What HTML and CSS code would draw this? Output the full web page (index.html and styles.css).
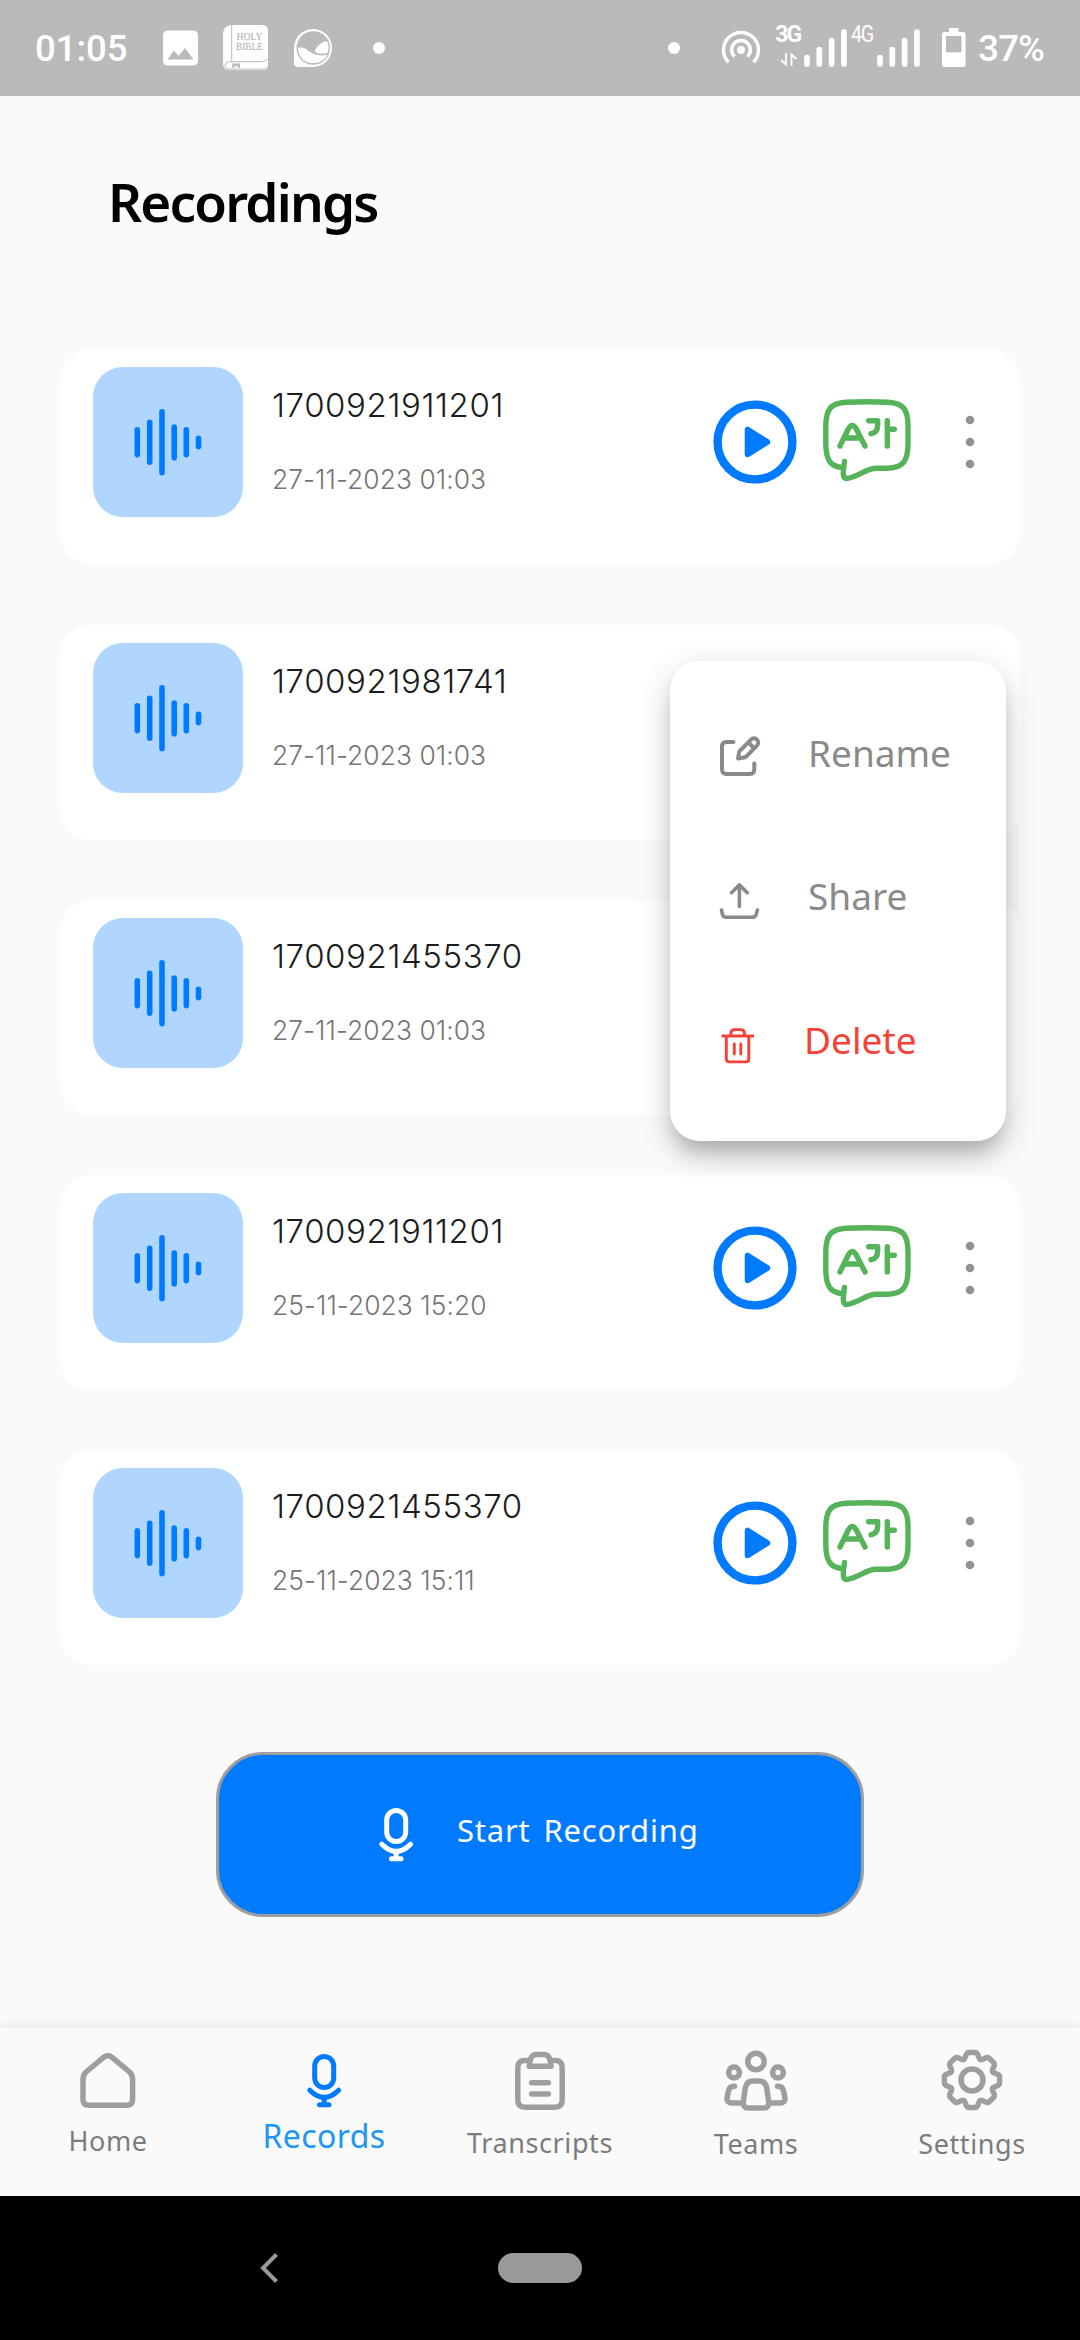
FILE: index.html
```
<!DOCTYPE html>
<html lang="en">
<head>
<meta charset="utf-8">
<title>Recordings</title>
<link rel="stylesheet" href="styles.css">
</head>
<body>
<svg class="sprite" aria-hidden="true">
  <symbol id="wave" viewBox="0 0 68 68">
    <g stroke="#007bff" stroke-width="5.6" stroke-linecap="round">
      <path d="M3.3 21.800V46.600M15.700 14.300V54.100M28 3.800V64.600M40.200 19.100V49.700M52.300 21.800V46.600M64.500 30.200V38.600"/>
    </g>
  </symbol>
  <symbol id="play" viewBox="0 0 84 84">
    <circle cx="42" cy="42" r="37.400" fill="none" stroke="#007bff" stroke-width="8.400"/>
    <path d="M34.700 29.700V54.300L54.300 42Z" fill="#007bff" stroke="#007bff" stroke-width="6" stroke-linejoin="round"/>
  </symbol>
  <symbol id="translate" viewBox="0 0 90 86">
    <g fill="none" stroke="#55b35a" stroke-width="5.400" stroke-linecap="round" stroke-linejoin="round">
      <path d="M21 69.600C8 69 4 61.500 3.800 46V28C4 11 9 5 24 4.200C36 3.700 54 3.700 66 4.200C81 5 86 11 86 28V46C86 63 81 69.500 66 70.200L53 70.300C44 71 36 78.500 25.500 80.400C21 80.800 21 77 21.500 71L22.500 63.500"/>
      <path d="M18 48L26.300 31Q30.300 24 34.300 31L43 48M22.500 40H38.500"/>
      <path d="M46.700 22.700H55.700V27Q55.500 35 49 35.700"/>
      <path d="M65.300 22.700V48M65.300 31.300H72.300"/>
    </g>
  </symbol>
  <symbol id="more" viewBox="0 0 24 60">
    <g fill="#929292"><circle cx="12" cy="8" r="4.300"/><circle cx="12" cy="30" r="4.300"/><circle cx="12" cy="52" r="4.300"/></g>
  </symbol>
  <symbol id="mic" viewBox="0 0 64 64">
    <g fill="none" stroke="currentColor" stroke-width="5" stroke-linecap="round">
      <rect x="22.700" y="8.500" width="19" height="31" rx="9.500"/>
      <path d="M17.800 42.200Q32.200 56.500 46.600 42.200M32.200 50V56M27.500 56.700H37"/>
    </g>
  </symbol>
</svg>

<header class="status">
  <span class="status-text">01:05</span>
  <svg class="s-photo" width="35" height="36" viewBox="0 0 35 36"><rect width="35" height="35" rx="4.500" y=".5" fill="#fff"/><path d="M4.500 29.500L11 20.500L15.500 26L22 18L30.500 29.500Z" fill="#bababa"/></svg>
  <svg class="s-bible" width="46" height="46" viewBox="0 0 46 46">
    <path d="M7.500 0H40Q45 0 45 6V41Q45 45 40 45H5Q0 44 0 38V8Q1 1 7.500 0Z" fill="#fff"/>
    <path d="M8.700 0V36M44.500 34Q42 36.700 38 36.700H6Q2 37.500 2 40.500Q2.500 44 6 44H39Q43 44 44.500 42" fill="none" stroke="#bababa" stroke-width="1"/>
    <path d="M9.300 38.500H17V43.500L13.200 40.800L9.300 43.500Z" fill="#bababa"/>
    <text x="13.500" y="14.500" textLength="26" lengthAdjust="spacingAndGlyphs" class="book-text">HOLY</text>
    <text x="13" y="25" textLength="27" lengthAdjust="spacingAndGlyphs" class="book-text">BIBLE</text>
  </svg>
  <svg class="s-leaf" width="39" height="39" viewBox="0 0 39 39">
    <path d="M0 19A19 19 0 1 1 19 38H4Q0 38 0 34Z" fill="#fff"/>
    <circle cx="19.300" cy="19" r="16.800" fill="#bababa"/>
    <path d="M4 19C11 17 14 23 20 25C25 27 30 26.500 33.500 25.500C31 31.500 26 34 19 34C10 34 4.500 28 4 19Z" fill="#fff"/>
    <path d="M20.500 22.500C23.500 16.500 27 13 32.500 12C35 15 35 19 34 23.500C29 25.500 24 25 20.500 22.500Z" fill="#fff"/>
  </svg>
  <i class="dot dot-left"></i>
  <i class="dot dot-right"></i>
  <svg class="s-cast" width="40" height="40" viewBox="0 0 40 40"><g fill="none" stroke="#fff" stroke-width="3.400"><path d="M7.600 32.300A17.500 17.500 0 1 1 32.400 32.300"/><path d="M13.600 26.600A9.300 9.300 0 1 1 26.400 26.600"/></g><circle cx="20" cy="20" r="4" fill="#fff"/></svg>
  <div class="net net-3g"><b>3G</b><svg width="16" height="13" viewBox="0 0 16 13"><path d="M5 0V11.500L0 7M10.500 13V1.500L15.500 6" fill="none" stroke="#fff" stroke-width="1.800"/></svg></div>
  <svg class="s-bars" width="44" height="38" viewBox="0 0 44 38"><path d="M3 28.500V35M15.300 20.500V35M27.600 11.500V35M39.900 3V35" stroke="#fff" stroke-width="5.700" stroke-linecap="round"/></svg>
  <div class="net net-4g">4G</div>
  <svg class="s-bars" width="44" height="38" viewBox="0 0 44 38"><path d="M3 28.500V35M15.300 20.500V35M27.600 11.500V35M39.900 3V35" stroke="#fff" stroke-width="5.700" stroke-linecap="round"/></svg>
  <svg class="s-battery" width="24" height="40" viewBox="0 0 24 40"><path d="M7 0H16.500V4H21Q23.500 4 23.500 6.500V36.500Q23.500 39 21 39H2.500Q0 39 0 36.500V6.500Q0 4 2.500 4H7Z" fill="#fff"/><path d="M4 8H19.500V24.300H4Z" fill="#bababa"/></svg>
  <span class="status-text percent">37%</span>
</header>

<main>
  <h1>Recordings</h1>
  <div class="list">
    <article class="card">
      <div class="tile"><svg><use href="#wave"/></svg></div>
      <div class="info"><h2>1700921911201</h2><p>27-11-2023 01:03</p></div>
      <div class="actions"><svg class="play"><use href="#play"/></svg><svg class="translate"><use href="#translate"/></svg><svg class="more"><use href="#more"/></svg></div>
    </article>
    <article class="card">
      <div class="tile"><svg><use href="#wave"/></svg></div>
      <div class="info"><h2>1700921981741</h2><p>27-11-2023 01:03</p></div>
    </article>
    <article class="card">
      <div class="tile"><svg><use href="#wave"/></svg></div>
      <div class="info"><h2>1700921455370</h2><p>27-11-2023 01:03</p></div>
    </article>
    <article class="card">
      <div class="tile"><svg><use href="#wave"/></svg></div>
      <div class="info"><h2>1700921911201</h2><p>25-11-2023 15:20</p></div>
      <div class="actions"><svg class="play"><use href="#play"/></svg><svg class="translate"><use href="#translate"/></svg><svg class="more"><use href="#more"/></svg></div>
    </article>
    <article class="card">
      <div class="tile"><svg><use href="#wave"/></svg></div>
      <div class="info"><h2>1700921455370</h2><p>25-11-2023 15:11</p></div>
      <div class="actions"><svg class="play"><use href="#play"/></svg><svg class="translate"><use href="#translate"/></svg><svg class="more"><use href="#more"/></svg></div>
    </article>
  </div>
  <button class="record"><svg><use href="#mic"/></svg><span>Start Recording</span></button>

  <div class="menu">
    <div class="menu-row">
      <svg viewBox="0 0 48 48"><g fill="none" stroke="currentColor" stroke-width="4" stroke-linecap="round" stroke-linejoin="round"><path d="M17.500 13H10.500Q6 13 6 17.500V40.500Q6 45 10.500 45H34Q38.300 45 38.300 40.500V34.500"/><path d="M22 29.500L23.300 22.300L35 10.600A4.200 4.200 0 0 1 41 16.600L29.300 28.300ZM32.500 13.500L38 19"/></g></svg>
      <span>Rename</span>
    </div>
    <div class="menu-row">
      <svg viewBox="0 0 48 48"><g fill="none" stroke="currentColor" stroke-width="3.600" stroke-linecap="round" stroke-linejoin="round"><path d="M23.400 34.500V13M15.500 20.700L23.400 12.900L31.300 20.700M5.500 38L6.500 42.500Q7.300 45.200 10 45.200H36.500Q39.500 45.200 40.200 42.500L41.400 38"/></g></svg>
      <span>Share</span>
    </div>
    <div class="menu-row danger">
      <svg viewBox="0 0 48 48"><g fill="none" stroke="currentColor" stroke-width="2.900"><path d="M5.700 20H38M14.800 20V17.500Q15 13.600 18.500 13.600H24.800Q28.300 13.600 28.500 17.500V20M10.300 20V42.700Q10.300 45.900 13.500 45.900H29.700Q32.800 45.900 32.800 42.700V20"/><path d="M18.300 28V38M24.800 28V38" stroke-linecap="round"/></g></svg>
      <span>Delete</span>
    </div>
  </div>
</main>

<nav class="tabs">
  <a class="tab home"><svg viewBox="0 0 64 64"><path d="M7 51.500V31Q7 27 10 24L27.300 9.600Q31.800 5.600 36.300 9.600L53.600 24Q56.600 27 56.600 31V51.500Q56.600 57.300 50.800 57.300H12.800Q7 57.300 7 51.500Z"/></svg><span>Home</span></a>
  <a class="tab active"><svg><use href="#mic"/></svg><span>Records</span></a>
  <a class="tab transcripts"><svg viewBox="0 0 64 64"><path d="M22 12.400H17Q9.800 12.400 9.800 19.500V52Q9.800 59.200 17 59.200H47Q54.200 59.200 54.200 52V19.500Q54.200 12.400 47 12.400H42M21.300 18.300H43Q42.500 6.500 36 6.400H28.300Q21.800 6.500 21.300 18.300ZM23.700 34.800H40.300M23.700 45.900H40.300"/></svg><span>Transcripts</span></a>
  <a class="tab"><svg viewBox="0 0 64 64"><circle cx="32" cy="13.500" r="8.200"/><circle cx="10" cy="24.500" r="5.400"/><circle cx="54" cy="24.500" r="5.400"/><path d="M19.300 54L21.300 40Q22.500 33 29 33H35Q41.500 33 42.700 40L44.700 54Q44.800 60 40 60H24Q19.200 60 19.300 54ZM10.500 38.300Q5.500 38 4.400 43L3 50.300Q2.800 55 8 55H18M53.500 38.300Q58.500 38 59.600 43L61 50.300Q61.200 55 56 55H46"/></svg><span>Teams</span></a>
  <a class="tab"><svg viewBox="-32 -32 64 64">
    <path id="tooth" d="M-8.500-20.600C-5.600-21.700-7-27.600-3-27.600H3C7-27.600 5.600-21.700 8.500-20.600"/>
    <use href="#tooth" transform="rotate(45)"/><use href="#tooth" transform="rotate(90)"/><use href="#tooth" transform="rotate(135)"/><use href="#tooth" transform="rotate(180)"/><use href="#tooth" transform="rotate(225)"/><use href="#tooth" transform="rotate(270)"/><use href="#tooth" transform="rotate(315)"/>
    <circle r="11"/></svg><span>Settings</span></a>
</nav>

<footer class="system">
  <svg width="18" height="30" viewBox="0 0 18 30"><path d="M16.500 1.500L3 15L16.500 28.500" fill="none" stroke="#999" stroke-width="4"/></svg>
  <i class="pill"></i>
</footer>
</body>
</html>
```
FILE: styles.css
```
* { box-sizing: border-box; margin: 0; padding: 0; }
body {
  width: 1080px; height: 2340px; overflow: hidden;
  display: flex; flex-direction: column;
  background: #fafafa;
  font-family: "Noto Sans", sans-serif;
  font-weight: 400;
}
svg { display: block; flex: none; }
.sprite { position: absolute; width: 0; height: 0; }

.status {
  flex: none; height: 96px; padding: 0 36px 0 35px;
  display: flex; align-items: center;
  background: #bababa; color: #fff;
  font-family: Roboto, sans-serif;
}
.status-text { font-size: 36.5px; font-weight: 500; line-height: 44px; width: 93px; padding-top: 2px; white-space: nowrap; }
.percent { width: auto; margin-left: 12px; letter-spacing: -.9px; }
.s-photo { margin-left: 35px; }
.s-bible { margin-left: 25px; }
.s-leaf { margin-left: 25px; }
.dot { width: 12px; height: 12px; border-radius: 50%; background: #fff; }
.dot-left { margin-left: 40px; }
.dot-right { margin-left: auto; }
.s-cast { margin: 4px 0 0 41px; }
.net { height: 46px; font-size: 23px; line-height: 20px; }
.net-3g { width: 28px; margin-left: 14px; }
.net-3g b { display: block; font-weight: 700; font-size: 23px; letter-spacing: -2px; }
.net-3g svg { margin: 8px 0 0 6px; }
.net-4g { width: 25px; margin-left: 3px; font-weight: 400; letter-spacing: -1.500px; transform: scaleX(.86); transform-origin: left; }
.s-bars { margin-left: 1px; }
.s-battery { margin-left: 21px; }
.book-text { font: 9.500px "Liberation Serif", serif; fill: #aaa; }

main { flex: 1; position: relative; display: flex; flex-direction: column; }
h1 { margin: 70px 0 0 108px; font-size: 53px; line-height: 72px; font-weight: 600; letter-spacing: -1.800px; }
.list { margin: 111.450px 60px 0; display: flex; flex-direction: column; gap: 60.200px; }
.card { height: 215px; border-radius: 30px; background: #fff; padding: 18px 38px 0 33px; display: flex; align-items: flex-start; }
.tile { width: 150px; height: 150px; border-radius: 30px; background: #b0d6ff; display: flex; align-items: center; justify-content: center; }
.tile svg { width: 68px; height: 68px; }
.info { margin: 18px 0 0 29px; font-family: Inter, sans-serif; font-weight: 300; }
.info h2 { font-size: 33px; line-height: 40px; font-weight: 300; letter-spacing: .6px; color: #1c1c1c; }
.info p { margin-top: 37px; font-size: 26.400px; line-height: 34px; letter-spacing: .05px; color: #757575; }
.actions { margin-left: auto; height: 150px; display: flex; align-items: center; }
.play { width: 84px; height: 84px; }
.translate { width: 90px; height: 86px; margin: -2px 0 0 25px; }
.more { width: 24px; height: 60px; margin-left: 46px; }

.record {
  width: 648px; height: 165px; margin: 86.800px 0 0 216px; padding: 0 0 0 145px;
  display: flex; align-items: flex-start;
  border: 3px solid #9e9e9e; border-radius: 47px; background: #007bff; color: #fff;
  font: 400 31px/40px "Noto Sans", sans-serif;
}
.record svg { width: 64px; height: 64px; margin-top: 47px; }
.record span { margin: 55px 0 0 29px; letter-spacing: .800px; word-spacing: 4px; white-space: nowrap; }

.menu {
  position: absolute; left: 670px; top: 565px; width: 336px; height: 480px;
  padding: 20px 0 0 46px; border-radius: 30px; background: #fff;
  box-shadow: 0 16px 20px -6px rgba(0,0,0,.2), 0 14px 34px 0 rgba(0,0,0,.14), 0 4px 36px 2px rgba(0,0,0,.05);
  color: #8a8a8a;
}
.menu-row { height: 143.500px; display: flex; align-items: center; gap: 44px; font-size: 37px; line-height: 50px; letter-spacing: 0; }
.menu-row svg { width: 48px; height: 48px; }
.menu-row.danger { color: #f44336; gap: 40px; }

.tabs {
  flex: none; height: 168px; padding-top: 20px; position: relative;
  display: grid; grid-template-columns: repeat(5, 1fr);
  background: #fafafa; box-shadow: 0 -1px 12px rgba(0,0,0,.09);
}
.tab { display: flex; flex-direction: column; align-items: center; color: #7c7c7c; font-size: 27px; line-height: 36px; letter-spacing: .600px; }
.tab svg { width: 64px; height: 64px; fill: none; stroke: #9e9e9e; stroke-width: 5.500; stroke-linecap: round; stroke-linejoin: round; }
.tab span { margin-top: 14px; }
.tab.home span { margin-top: 11px; }
.tab.transcripts span { margin-top: 13px; }
.tab.active { color: #2196f3; font-size: 32px; letter-spacing: .4px; }
.tab.active svg { color: #007bff; stroke: none; }
.tab.active span { margin-top: 6px; }

.system { flex: none; height: 144px; padding: 0 0 0 260px; background: #000; display: flex; align-items: center; position: relative; }
.pill { width: 84px; height: 30px; margin-left: 220px; border-radius: 15px; background: #999; }
```
